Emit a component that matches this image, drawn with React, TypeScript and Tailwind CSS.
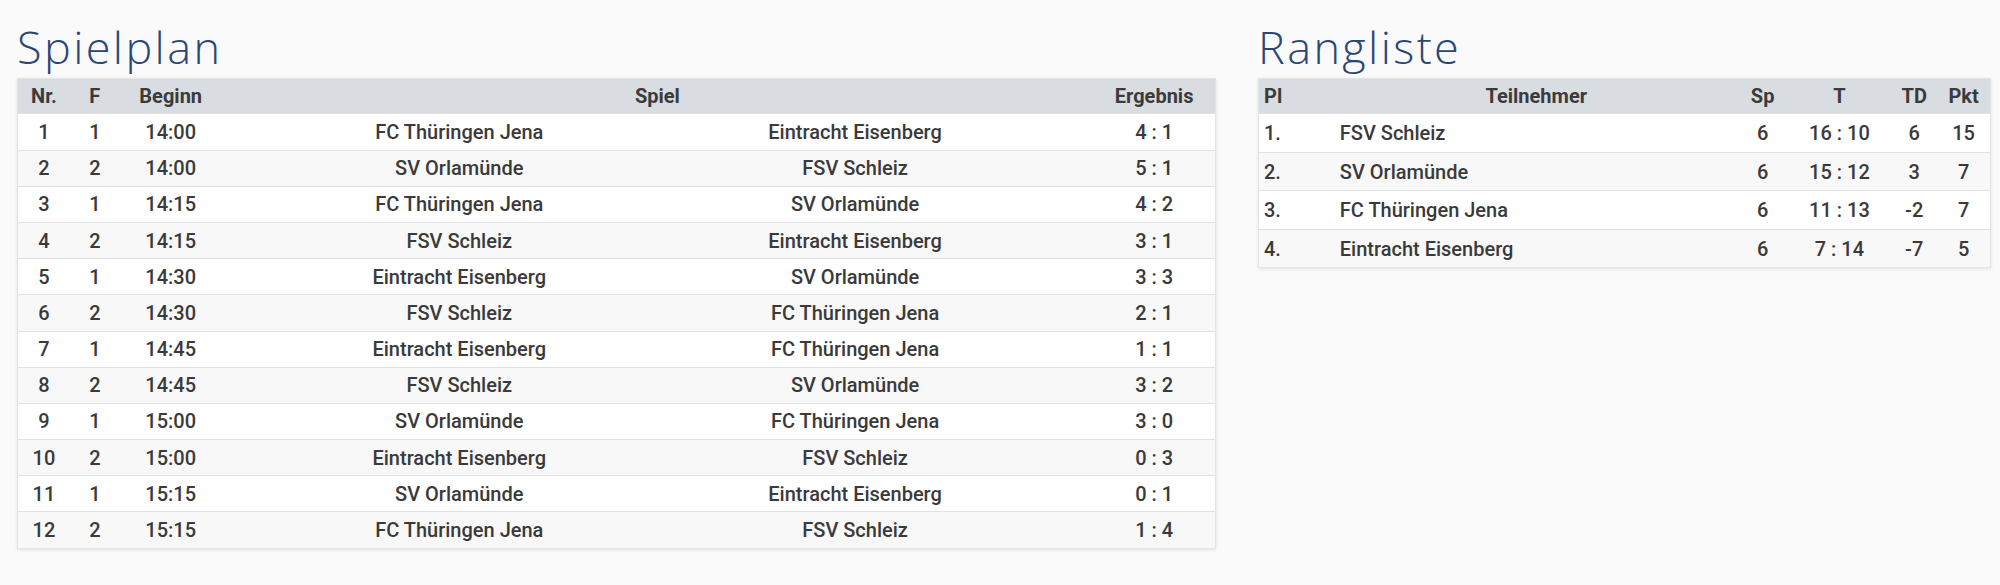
import React from 'react';

const games = [
  [1, 1, '14:00', 'FC Thüringen Jena', 'Eintracht Eisenberg', '4 : 1'],
  [2, 2, '14:00', 'SV Orlamünde', 'FSV Schleiz', '5 : 1'],
  [3, 1, '14:15', 'FC Thüringen Jena', 'SV Orlamünde', '4 : 2'],
  [4, 2, '14:15', 'FSV Schleiz', 'Eintracht Eisenberg', '3 : 1'],
  [5, 1, '14:30', 'Eintracht Eisenberg', 'SV Orlamünde', '3 : 3'],
  [6, 2, '14:30', 'FSV Schleiz', 'FC Thüringen Jena', '2 : 1'],
  [7, 1, '14:45', 'Eintracht Eisenberg', 'FC Thüringen Jena', '1 : 1'],
  [8, 2, '14:45', 'FSV Schleiz', 'SV Orlamünde', '3 : 2'],
  [9, 1, '15:00', 'SV Orlamünde', 'FC Thüringen Jena', '3 : 0'],
  [10, 2, '15:00', 'Eintracht Eisenberg', 'FSV Schleiz', '0 : 3'],
  [11, 1, '15:15', 'SV Orlamünde', 'Eintracht Eisenberg', '0 : 1'],
  [12, 2, '15:15', 'FC Thüringen Jena', 'FSV Schleiz', '1 : 4'],
];

const ranking = [
  ['1.', 'FSV Schleiz', 6, '16 : 10', 6, 15],
  ['2.', 'SV Orlamünde', 6, '15 : 12', 3, 7],
  ['3.', 'FC Thüringen Jena', 6, '11 : 13', -2, 7],
  ['4.', 'Eintracht Eisenberg', 6, '7 : 14', -7, 5],
];

function Title({ children }: { children: React.ReactNode }) {
  return (
    <h2 className="font-['Open_Sans',sans-serif] text-[45px] leading-[45px] font-[350] tracking-[2.4px] text-[#2a4677] mb-[9px]">
      {children}
    </h2>
  );
}

function Spielplan() {
  return (
    <div className="w-[1199px]">
      <Title>Spielplan</Title>
      <div className="border border-[#e4e4e4] shadow-[0_1px_3px_rgba(0,0,0,0.1)]">
        <div className="flex items-center h-[34.4px] bg-[#d9dde2] font-bold text-[#3b3b3b]">
          <div className="w-[52px] text-center">Nr.</div>
          <div className="w-[50px] text-center">F</div>
          <div className="w-[102px] text-center">Beginn</div>
          <div className="w-[833px] pl-[40px] text-center">Spiel</div>
          <div className="w-[162px] pl-[40px] text-center">Ergebnis</div>
        </div>
        {games.map((g, i) => (
          <div
            key={i}
            className={`flex items-center h-[36.2px] border-t border-[#e2e2e2] ${i % 2 === 1 ? 'bg-[#f8f8f8]' : 'bg-white'}`}
          >
            <div className="w-[52px] text-center">{g[0]}</div>
            <div className="w-[50px] text-center">{g[1]}</div>
            <div className="w-[102px] text-center">{g[2]}</div>
            <div className="w-[436px] pl-[40px] text-center">{g[3]}</div>
            <div className="w-[397px] text-center">{g[4]}</div>
            <div className="w-[162px] pl-[40px] text-center">{g[5]}</div>
          </div>
        ))}
      </div>
    </div>
  );
}

function Rangliste() {
  return (
    <div className="w-[733px]">
      <Title>Rangliste</Title>
      <div className="border border-[#e4e4e4] shadow-[0_1px_3px_rgba(0,0,0,0.1)]">
        <div className="flex items-center h-[34.4px] bg-[#d9dde2] font-bold text-[#3b3b3b]">
          <div className="w-[76px] pl-[5px]">Pl</div>
          <div className="w-[404px] text-center">Teilnehmer</div>
          <div className="w-[50px] text-center">Sp</div>
          <div className="w-[104px] text-center">T</div>
          <div className="w-[46px] text-center">TD</div>
          <div className="w-[53px] text-center">Pkt</div>
        </div>
        {ranking.map((r, i) => (
          <div
            key={i}
            className={`flex items-center h-[38.5px] border-t border-[#e2e2e2] ${i % 2 === 1 ? 'bg-[#f8f8f8]' : 'bg-white'}`}
          >
            <div className="w-[76px] pl-[5px]">{r[0]}</div>
            <div className="w-[404px] pl-[5px]">{r[1]}</div>
            <div className="w-[50px] text-center">{r[2]}</div>
            <div className="w-[104px] text-center">{r[3]}</div>
            <div className="w-[46px] text-center">{r[4]}</div>
            <div className="w-[53px] text-center">{r[5]}</div>
          </div>
        ))}
      </div>
    </div>
  );
}

export default function App() {
  return (
    <div className="min-h-[585px] bg-[#fafafa] pt-[24px] pl-[17px] font-['Roboto',sans-serif] text-[20px] leading-[24px] font-medium text-[#3a3a3a]">
      <div className="flex items-start gap-[42px]">
        <Spielplan />
        <Rangliste />
      </div>
    </div>
  );
}
